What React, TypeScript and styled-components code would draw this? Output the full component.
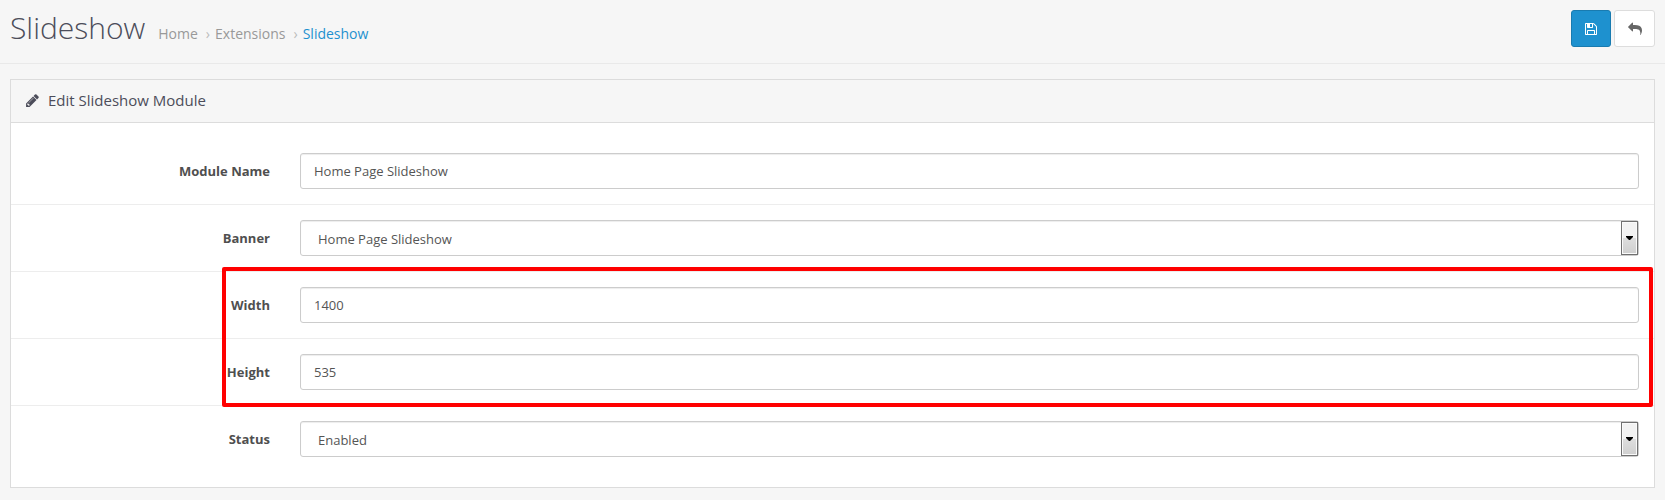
import React from "react";
import styled, { createGlobalStyle } from "styled-components";

const GlobalStyle = createGlobalStyle`
  *, *::before, *::after { box-sizing: border-box; }
  body {
    margin: 0;
    background: #f6f6f6;
    color: #555;
    font: 13px/20px "Open Sans", "Noto Sans", sans-serif;
  }
`;

const Page = styled.main`
  min-height: 500px;
`;

const Header = styled.header`
  display: flex;
  justify-content: space-between;
  height: 64px;
  padding: 10px 10px 0;
  border-bottom: 1px solid #e9e9e9;
`;

const Heading = styled.div`
  display: flex;
  align-items: baseline;
  height: 40px;
`;

const Title = styled.h1`
  margin: 0 13px 0 0;
  font-size: 30px;
  line-height: 36px;
  font-weight: 300;
  color: #4c4d5a;
`;

const Breadcrumb = styled.ol`
  display: flex;
  margin: 0;
  padding: 0;
  list-style: none;
  font-size: 14px;
`;

const Crumb = styled.li<{ $current?: boolean }>`
  color: ${(p) => (p.$current ? "#1e91cf" : "#999")};

  &:not(:first-child)::before {
    content: "›";
    padding: 0 5px 0 8px;
    color: #bbb;
  }
`;

const Actions = styled.div`
  display: flex;
  gap: 3px;
`;

const Button = styled.button<{ $primary?: boolean }>`
  display: flex;
  align-items: center;
  justify-content: center;
  width: ${(p) => (p.$primary ? 40 : 41)}px;
  height: 37px;
  padding: 0;
  border: 1px solid ${(p) => (p.$primary ? "#197bb0" : "#ddd")};
  border-radius: 3px;
  background: ${(p) => (p.$primary ? "#1e91cf" : "#fff")};
  color: ${(p) => (p.$primary ? "#fff" : "#666")};
`;

const Panel = styled.section`
  height: 409px;
  margin: 15px 10px 0;
  border: 1px solid #dcdcdc;
  background: #fff;
`;

const PanelHeading = styled.div`
  display: flex;
  align-items: center;
  gap: 8px;
  height: 43px;
  padding: 0 14px 1px;
  border-bottom: 1px solid #dcdcdc;
  background: #f6f6f6;
  color: #4c4d5a;
`;

const PanelTitle = styled.h2`
  margin: 0;
  padding-bottom: 1px;
  font-size: 15px;
  line-height: 20px;
  font-weight: 400;
`;

const Form = styled.form`
  position: relative;
  padding-top: 15px;
`;

const FormRow = styled.div`
  display: grid;
  grid-template-columns: 259px 1fr;
  column-gap: 30px;
  align-items: center;
  height: 67px;
  padding-right: 15px;
  border-top: 1px solid #ededed;

  &:first-child {
    height: 66px;
    border-top: 0;
  }
`;

const Label = styled.label`
  text-align: right;
  font-weight: 700;
  color: #4f4f4f;
`;

const Input = styled.input`
  width: 100%;
  height: 36px;
  padding: 0 13px;
  border: 1px solid #ccc;
  border-radius: 3px;
  background: #fff;
  box-shadow: inset 0 1px 1px rgba(0, 0, 0, 0.075);
  color: #555;
  font: inherit;
  outline: none;
`;

const SelectBox = styled.div`
  display: flex;
  height: 36px;
  border: 1px solid #ccc;
  border-radius: 3px;
  background: #fff;
  box-shadow: inset 0 1px 1px rgba(0, 0, 0, 0.075);
`;

const Select = styled.select`
  flex: 1;
  appearance: none;
  height: 34px;
  padding: 2px 0 0 17px;
  border: 0;
  background: transparent;
  color: #555;
  font: inherit;
`;

const SelectArrow = styled.span`
  display: flex;
  align-items: center;
  justify-content: center;
  width: 17px;
  height: 34px;
  border: 1px solid #707070;
  background: linear-gradient(#f2f2f2 0 50%, #dedede 50%, #cfcfcf);
  box-shadow: inset 0 0 0 1px #fafafa;
`;

const Highlight = styled.div`
  position: absolute;
  top: 144px;
  left: 211px;
  right: 1px;
  height: 140px;
  border: 4px solid #f00;
  border-radius: 2px;
  pointer-events: none;
`;

const Glyph = ({ d, size = 14, flip }: { d: string; size?: number; flip?: boolean }) => (
  <svg width={size} height={size} viewBox="0 0 1792 1792" fill="currentColor" aria-hidden="true">
    <path d={d} transform={flip ? "translate(1792 0) scale(-1 1)" : undefined} />
  </svg>
);

const PENCIL =
  "M491 1536l91-91-235-235-91 91v107h128v128h107zm523-928q0-22-22-22-10 0-17 7l-542 542q-7 7-7 17 0 22 22 22 10 0 17-7l542-542q7-7 7-17zm-54-192l416 416-832 832h-416v-416zm683 96q0 53-37 90l-166 166-416-416 166-165q36-38 90-38 53 0 91 38l235 234q37 39 37 91z";
const FLOPPY =
  "M512 1536h768v-384h-768v384zm896 0h128v-896q0-14-10-38.5t-20-34.5l-281-281q-10-10-34-20t-39-10v416q0 40-28 68t-68 28h-576q-40 0-68-28t-28-68v-416h-128v1280h128v-416q0-40 28-68t68-28h832q40 0 68 28t28 68v416zm-384-928v-320q0-13-9.5-22.5t-22.5-9.5h-192q-13 0-22.5 9.5t-9.5 22.5v320q0 13 9.5 22.5t22.5 9.5h192q13 0 22.5-9.5t9.5-22.5zm640 32v928q0 40-28 68t-68 28h-1344q-40 0-68-28t-28-68v-1344q0-40 28-68t68-28h928q40 0 88 20t76 48l280 280q28 28 48 76t20 88z";
const SHARE =
  "M1792 640q0 26-19 45l-512 512q-19 19-45 19t-45-19-19-45v-256h-224q-98 0-175.5 6t-154 21.5-133 42.5-105.5 69.5-80 101-48.5 138.5-17.5 181q0 55 5 123 0 6 2.5 23.5t2.5 26.5q0 15-8.5 25t-23.5 10q-16 0-28-17-7-9-13-22t-13.5-30-10.5-24q-127-285-127-451 0-199 53-333 162-403 875-403h224v-256q0-26 19-45t45-19 45 19l512 512q19 19 19 45z";

type Field = { id: string; label: string; value: string; select?: boolean };

const fields: Field[] = [
  { id: "name", label: "Module Name", value: "Home Page Slideshow" },
  { id: "banner", label: "Banner", value: "Home Page Slideshow", select: true },
  { id: "width", label: "Width", value: "1400" },
  { id: "height", label: "Height", value: "535" },
  { id: "status", label: "Status", value: "Enabled", select: true },
];

export default function App() {
  return (
    <Page>
      <GlobalStyle />
      <Header>
        <Heading>
          <Title>Slideshow</Title>
          <Breadcrumb>
            <Crumb>Home</Crumb>
            <Crumb>Extensions</Crumb>
            <Crumb $current>Slideshow</Crumb>
          </Breadcrumb>
        </Heading>
        <Actions>
          <Button $primary type="button" aria-label="Save">
            <Glyph d={FLOPPY} />
          </Button>
          <Button type="button" aria-label="Cancel">
            <Glyph d={SHARE} flip />
          </Button>
        </Actions>
      </Header>
      <Panel>
        <PanelHeading>
          <Glyph d={PENCIL} size={15} />
          <PanelTitle>Edit Slideshow Module</PanelTitle>
        </PanelHeading>
        <Form>
          {fields.map((f) => (
            <FormRow key={f.id}>
              <Label htmlFor={f.id}>{f.label}</Label>
              {f.select ? (
                <SelectBox>
                  <Select id={f.id} defaultValue={f.value}>
                    <option>{f.value}</option>
                  </Select>
                  <SelectArrow>
                    <svg width="7" height="4" viewBox="0 0 7 4" aria-hidden="true">
                      <path d="M0 0H7V1L4 4H3L0 1Z" fill="#000" />
                    </svg>
                  </SelectArrow>
                </SelectBox>
              ) : (
                <Input id={f.id} defaultValue={f.value} />
              )}
            </FormRow>
          ))}
          <Highlight />
        </Form>
      </Panel>
    </Page>
  );
}
